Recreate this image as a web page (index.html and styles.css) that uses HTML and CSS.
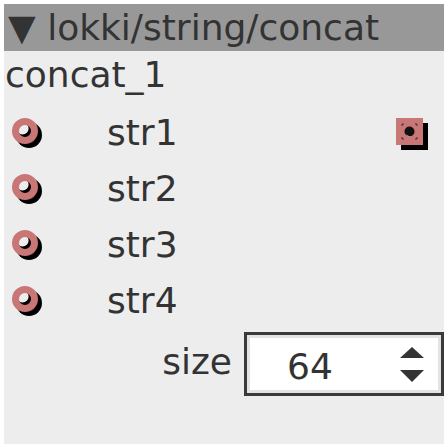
FILE: index.html
```html
<!DOCTYPE html>
<html lang="en">
<head>
    <meta charset="UTF-8">
    <title>lokki/string/concat</title>
    <link rel="stylesheet" href="styles.css">
</head>
<body>

<div class="node">
    <div class="node-title">▼ lokki/string/concat</div>
    <div class="node-name">concat_1</div>

    <div class="ports">
        <div class="port-row">
            <svg class="inlet" width="32" height="32" viewBox="0 0 32 32">
                <circle cx="17" cy="17" r="13" fill="#000"/>
                <circle cx="10.6" cy="10.6" r="6" fill="#ededed"/>
                <circle cx="13" cy="13" r="9.5" fill="none" stroke="#c97676" stroke-width="7"/>
            </svg>
            <span class="port-label">str1</span>
            <svg class="outlet" width="32" height="32" viewBox="0 0 32 32">
                <rect x="5" y="5" width="27" height="27" fill="#000"/>
                <rect x="0" y="0" width="27" height="27" fill="#c97676"/>
                <circle cx="13.5" cy="13.5" r="5" fill="#111"/>
                <path d="M9.2 15.6 A5 5 0 0 0 15.6 17.9 A6 6 0 0 1 9.2 15.6 Z" fill="#fff"/>
                <path d="M6 8 v-2 h2 M19 6 h2 v2 M21 19 v2 h-2 M8 21 h-2 v-2" fill="none" stroke="#333" stroke-width="1"/>
            </svg>
        </div>
        <div class="port-row">
            <svg class="inlet" width="32" height="32" viewBox="0 0 32 32">
                <circle cx="17" cy="17" r="13" fill="#000"/>
                <circle cx="10.6" cy="10.6" r="6" fill="#ededed"/>
                <circle cx="13" cy="13" r="9.5" fill="none" stroke="#c97676" stroke-width="7"/>
            </svg>
            <span class="port-label">str2</span>
        </div>
        <div class="port-row">
            <svg class="inlet" width="32" height="32" viewBox="0 0 32 32">
                <circle cx="17" cy="17" r="13" fill="#000"/>
                <circle cx="10.6" cy="10.6" r="6" fill="#ededed"/>
                <circle cx="13" cy="13" r="9.5" fill="none" stroke="#c97676" stroke-width="7"/>
            </svg>
            <span class="port-label">str3</span>
        </div>
        <div class="port-row">
            <svg class="inlet" width="32" height="32" viewBox="0 0 32 32">
                <circle cx="17" cy="17" r="13" fill="#000"/>
                <circle cx="10.6" cy="10.6" r="6" fill="#ededed"/>
                <circle cx="13" cy="13" r="9.5" fill="none" stroke="#c97676" stroke-width="7"/>
            </svg>
            <span class="port-label">str4</span>
        </div>
    </div>

    <div class="param-row">
        <span class="param-label">size</span>
        <div class="spinbox">
            <span class="spin-value">64</span>
            <svg class="spin-arrows" width="26" height="36" viewBox="0 0 26 36">
                <polygon points="13,0 25,11 1,11" fill="#333"/>
                <polygon points="1,23 25,23 13,35" fill="#333"/>
            </svg>
        </div>
    </div>
</div>

</body>
</html>
```

FILE: styles.css
```css
body {
    margin: 0;
    padding: 4px;
    background-color: #fff;
    font-family: "DejaVu Sans", sans-serif;
    color: #333;
}
.node {
    width: 440px;
    height: 440px;
    background-color: #ededed;
}
.node-title {
    height: 47px;
    line-height: 47px;
    padding-left: 4px;
    font-size: 36px;
    background-color: #989898;
    white-space: nowrap;
}
.node-name {
    height: 47px;
    line-height: 47px;
    padding-left: 1px;
    font-size: 36px;
}
.ports {
    margin-top: 6px;
}
.port-row {
    display: flex;
    align-items: center;
    height: 56px;
    padding-left: 8px;
}
.inlet {
    flex: none;
    margin-top: 4px;
}
.port-label {
    font-size: 36px;
    margin-left: 63px;
}
.outlet {
    flex: none;
    margin-left: auto;
    margin-right: 16px;
    margin-top: 4px;
}
.param-row {
    display: flex;
    justify-content: flex-end;
    align-items: center;
    margin-top: 4px;
}
.param-label {
    font-size: 36px;
    margin-right: 12px;
    margin-bottom: 5px;
}
.spinbox {
    display: flex;
    align-items: center;
    box-sizing: border-box;
    width: 200px;
    height: 64px;
    border: 3px solid #3a3a3a;
    box-shadow: inset 0 0 0 3px #e4e4e4;
    background-color: #fff;
}
.spin-value {
    flex: 1;
    font-size: 36px;
    padding-left: 40px;
    padding-top: 4px;
}
.spin-arrows {
    flex: none;
    margin-right: 16px;
    margin-top: 2px;
}
```
